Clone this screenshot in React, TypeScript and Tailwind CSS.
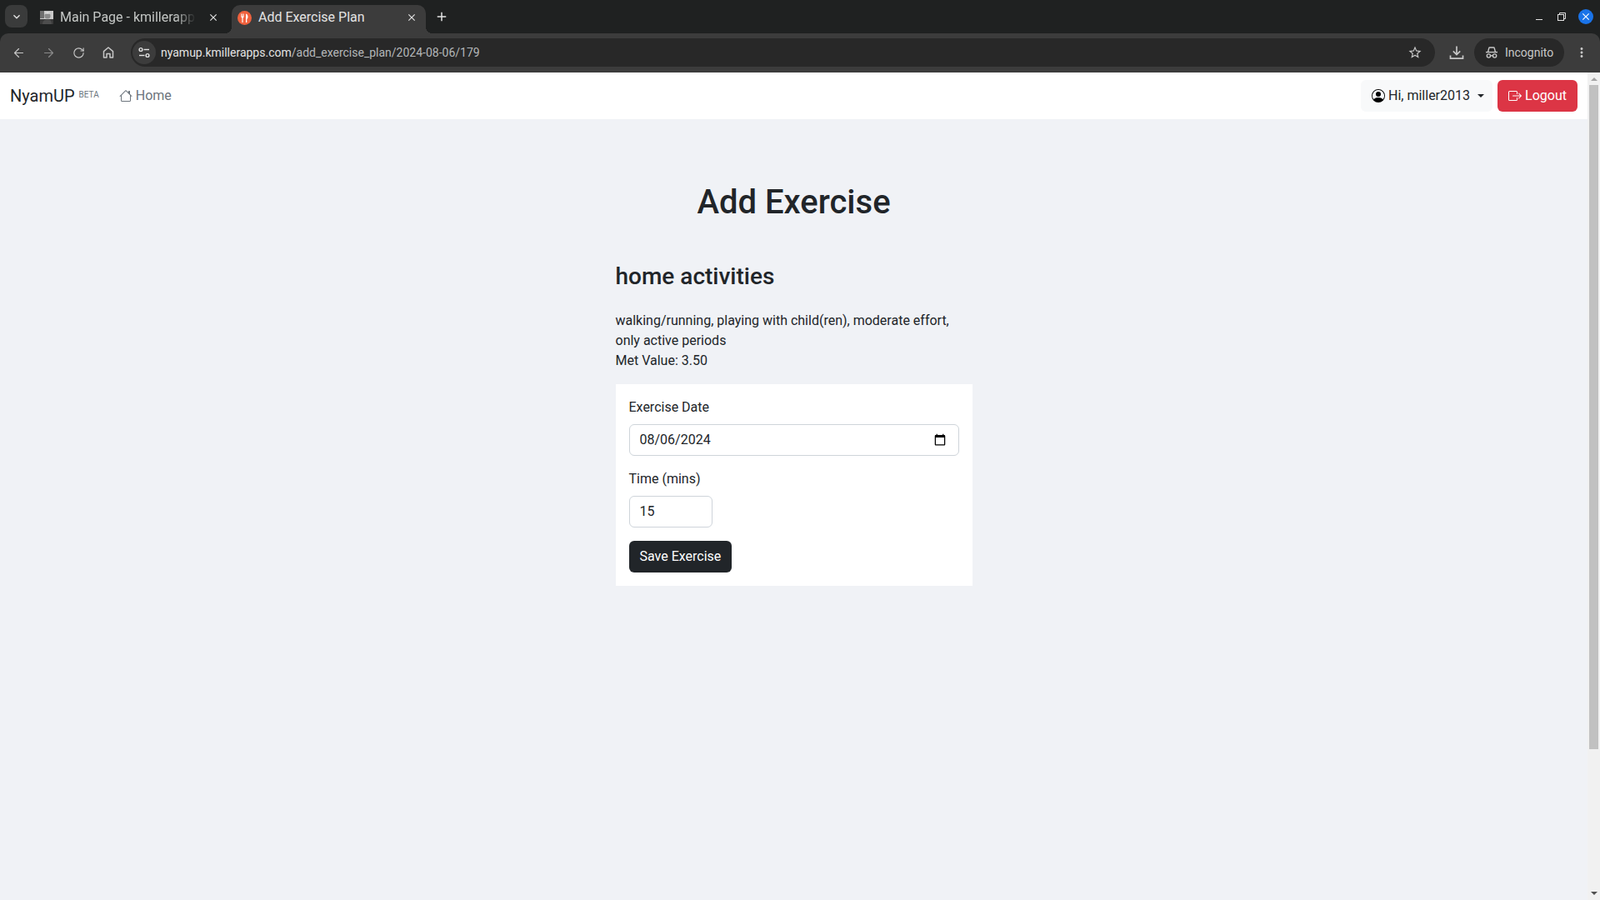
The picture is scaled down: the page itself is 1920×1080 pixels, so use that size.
import React from 'react';
import { ArrowLeft, ArrowRight, RotateCw } from 'lucide-react';
import { BsBoxArrowRight, BsHouse, BsPersonCircle } from 'react-icons/bs';
import { MdAdd, MdClose, MdKeyboardArrowDown, MdMoreVert, MdStarBorder } from 'react-icons/md';

const IncognitoIcon = () => (
  <svg width="16" height="16" viewBox="0 0 16 16" fill="none" stroke="currentColor" strokeWidth="1.4">
    <path d="M1 7.6h14" />
    <path d="M3.6 7.2 4.8 2.6c.1-.4.4-.6.8-.6h4.8c.4 0 .7.2.8.6l1.2 4.6" />
    <circle cx="4.4" cy="12" r="2.1" />
    <circle cx="11.6" cy="12" r="2.1" />
    <path d="M6.5 11.8h3" />
  </svg>
);

const SiteInfoIcon = () => (
  <svg width="16" height="16" viewBox="0 0 16 16" fill="none" stroke="currentColor" strokeWidth="1.4">
    <circle cx="4" cy="4.5" r="1.9" />
    <path d="M7.5 4.5h6.5" />
    <path d="M2 11.5h6.5" />
    <circle cx="12" cy="11.5" r="1.9" />
  </svg>
);

const HomeIcon = () => (
  <svg width="16" height="16" viewBox="0 0 16 16" fill="none" stroke="currentColor" strokeWidth="1.5" strokeLinejoin="round">
    <path d="M2.5 14V6.6L8 2l5.5 4.6V14H10V9.5H6V14z" />
  </svg>
);

const DownloadIcon = () => (
  <svg width="18" height="18" viewBox="0 0 18 18" fill="none" stroke="currentColor" strokeWidth="1.7">
    <path d="M9 1.5v10" />
    <path d="M4.8 7.4 9 11.6l4.2-4.2" />
    <path d="M1.5 12.5v3.6h15v-3.6" />
  </svg>
);

const RestoreIcon = () => (
  <svg width="10" height="10" viewBox="0 0 10 10" fill="none" stroke="currentColor" strokeWidth="1">
    <rect x="0.5" y="2.5" width="7" height="7" />
    <path d="M2.5 2.5v-2h7v7h-2" />
  </svg>
);

const PlateFavicon = () => (
  <svg width="17" height="17" viewBox="0 0 17 17" className="shrink-0">
    <circle cx="8.5" cy="8.5" r="8.5" fill="#f0623e" />
    <path d="M4.4 3.5v3.6c0 .8.5 1.3 1 1.5V14h1.2V8.6c.5-.2 1-.7 1-1.5V3.5H6.9v3h-.5v-3h-.8v3h-.5v-3z" fill="#fff" />
    <path d="M10 14V3.5c1.6.3 2.5 1.8 2.5 3.8 0 1.2-.4 2.2-1.2 2.6V14z" fill="#fff" />
  </svg>
);

const PhotoFavicon = () => (
  <svg width="16" height="16" viewBox="0 0 16 16" className="shrink-0">
    <rect width="16" height="16" fill="#c9c9c9" />
    <rect y="10" width="16" height="6" fill="#3a3a3a" />
    <rect width="5" height="9" fill="#6e6e6e" />
    <circle cx="9" cy="6" r="3.6" fill="#8a8a8a" />
    <path d="M6 3.5c1-2 5-2 6 0z" fill="#e8e8e8" />
    <path d="M3 16c0-4 3-6 6-6s5 2 5 6z" fill="#4d4d4d" />
  </svg>
);

const ToolbarButton: React.FC<{ children: React.ReactNode }> = ({ children }) => (
  <div className="w-[36px] flex items-center justify-center">{children}</div>
);

const BrowserChrome = () => (
  <div className="shrink-0">
    {/* Tab strip */}
    <div className="h-[40px] bg-[#1f2121] flex items-start text-[16px]">
      <div className="ml-[6px] mt-[6px] w-[27px] h-[27px] rounded-lg bg-[#3a3b3b] flex items-center justify-center text-[#e3e3e3]">
        <MdKeyboardArrowDown size={16} />
      </div>
      <div className="ml-[15px] mt-[9px] w-[230px] flex items-center text-[#c4c7c5]">
        <PhotoFavicon />
        <span className="ml-[8px] w-[163px] whitespace-nowrap overflow-hidden [mask-image:linear-gradient(to_right,black_85%,transparent)]">
          Main Page - kmillerapps
        </span>
        <MdClose size={14} className="ml-[14px] text-[#e3e3e3]" />
      </div>
      <div className="relative mt-[6px] w-[233px] h-[34px] rounded-t-[10px] bg-[#3c3c3c] flex items-center pl-[7px] pb-[4px] text-[#e3e3e3]">
        <span className="absolute left-[-8px] bottom-0 w-[8px] h-[8px] bg-[radial-gradient(circle_at_0_0,transparent_8px,#3c3c3c_8px)]" />
        <span className="absolute right-[-8px] bottom-0 w-[8px] h-[8px] bg-[radial-gradient(circle_at_100%_0,transparent_8px,#3c3c3c_8px)]" />
        <PlateFavicon />
        <span className="ml-[8px] w-[177px] whitespace-nowrap">Add Exercise Plan</span>
        <MdClose size={14} className="text-[#e3e3e3]" />
      </div>
      <MdAdd size={18} className="ml-[10px] mt-[11px] text-[#e3e3e3]" />
      <div className="ml-auto mt-[11px] flex items-center text-[#e3e3e3]">
        <div className="w-[8px] h-[1px] bg-[#e3e3e3] mt-[6px] mr-[18px]" />
        <RestoreIcon />
        <div className="ml-[15px] mr-[8px] w-[18px] h-[18px] rounded-full bg-[#1a73e8] flex items-center justify-center text-white">
          <MdClose size={14} />
        </div>
      </div>
    </div>

    {/* Toolbar */}
    <div className="bg-[#1f2121]">
      <div className="h-[47px] bg-[#3c3c3c] rounded-t-[10px] flex items-center text-[#c7c7c7] pl-[4px] pb-[1px]">
        <ToolbarButton><ArrowLeft size={17} strokeWidth={1.7} /></ToolbarButton>
        <ToolbarButton><ArrowRight size={17} strokeWidth={1.7} className="text-[#8a8a8a]" /></ToolbarButton>
        <ToolbarButton><RotateCw size={15} strokeWidth={1.8} /></ToolbarButton>
        <ToolbarButton><HomeIcon /></ToolbarButton>
        <div className="ml-[9px] w-[1565px] h-[34px] rounded-full bg-[#282828] flex items-center pl-[2px] pr-[16px]">
          <div className="w-[28px] h-[28px] rounded-full bg-[#3c3c3c] flex items-center justify-center text-[#e3e3e3]">
            <SiteInfoIcon />
          </div>
          <span className="ml-[6px] text-[14px] text-[#b4b7b9]">
            <span className="text-[#e3e3e3]">nyamup.kmillerapps.com</span>/add_exercise_plan/2024-08-06/179
          </span>
          <MdStarBorder size={18} className="ml-auto translate-x-[1px]" />
        </div>
        <div className="ml-[17px]"><DownloadIcon /></div>
        <div className="ml-[12px] w-[108px] h-[34px] rounded-full bg-[#282828] flex items-center pl-[13px] text-[14px]">
          <IncognitoIcon />
          <span className="ml-[8px]">Incognito</span>
        </div>
        <MdMoreVert size={18} className="ml-[12px]" />
      </div>
    </div>
  </div>
);

const Scrollbar = () => (
  <div className="w-[15px] shrink-0 bg-[#f1f1f1] flex flex-col items-center">
    <div className="mt-[6px] w-0 h-0 border-x-[4px] border-x-transparent border-b-[4px] border-b-[#a3a3a3]" />
    <div className="mt-[5px] w-[11px] h-[797px] bg-[#c1c1c1]" />
    <div className="mt-auto mb-[6px] w-0 h-0 border-x-[4px] border-x-transparent border-t-[4px] border-t-[#505050]" />
  </div>
);

const Navbar = () => (
  <nav className="h-[56px] bg-white flex items-center pl-[12px] pr-[12px] shrink-0">
    <span className="text-[20px] text-[#212529]">NyamUP</span>
    <span className="ml-[5px] mb-[3px] text-[10px] text-[#6c757d]">BETA</span>
    <a className="ml-[24px] flex items-center text-[#6c757d]">
      <BsHouse size={16} className="mr-[4px]" />
      Home
    </a>
    <div className="ml-auto h-[38px] w-[158px] rounded-md bg-[#f8f9fa] flex items-center pl-[13px] text-[#212529]">
      <BsPersonCircle size={16} className="mr-[4px] text-black" />
      Hi, miller2013
      <span className="ml-[9px] w-0 h-0 border-x-[4.8px] border-x-transparent border-t-[4.8px] border-t-[#212529]" />
    </div>
    <button className="ml-[6px] h-[38px] w-[96px] rounded-md bg-[#dc3545] text-white flex items-center justify-center">
      <BsBoxArrowRight size={16} className="mr-[4px]" />
      Logout
    </button>
  </nav>
);

const ExerciseForm = () => (
  <form className="bg-white p-[16px]">
    <label className="block mb-[8px]">Exercise Date</label>
    <input
      type="date"
      defaultValue="2024-08-06"
      className="block w-full h-[38px] px-[12px] mb-[16px] bg-white border border-[#ced4da] rounded-md [&::-webkit-datetime-edit-day-field]:p-0 [&::-webkit-datetime-edit-month-field]:p-0 [&::-webkit-datetime-edit-year-field]:p-0 [&::-webkit-datetime-edit-text]:p-0"
    />
    <label className="block mb-[8px]">Time (mins)</label>
    <input
      type="number"
      defaultValue="15"
      className="block w-[100px] h-[38px] px-[12px] pb-[1px] mb-[16px] bg-white border border-[#ced4da] rounded-md"
    />
    <button type="button" className="h-[38px] px-[13px] rounded-md bg-[#212529] text-white">
      Save Exercise
    </button>
  </form>
);

export default function App() {
  return (
    <div className="h-screen overflow-hidden flex flex-col font-['Roboto',sans-serif] text-[16px] leading-[24px] text-[#212529]">
      <BrowserChrome />
      <div className="flex-1 flex min-h-0">
        <div className="flex-1 min-w-0 flex flex-col bg-[#f0f2f6]">
          <Navbar />
          <main className="w-[428px] mx-auto pt-[76px]">
            <h1 className="text-[40px] leading-[48px] font-medium text-center mb-[48px]">Add Exercise</h1>
            <h2 className="text-[28px] leading-[34px] font-medium mb-[24px]">home activities</h2>
            <p className="mb-[16px]">
              walking/running, playing with child(ren), moderate effort, only active periods
              <br />
              Met Value: 3.50
            </p>
            <ExerciseForm />
          </main>
        </div>
        <Scrollbar />
      </div>
    </div>
  );
}
